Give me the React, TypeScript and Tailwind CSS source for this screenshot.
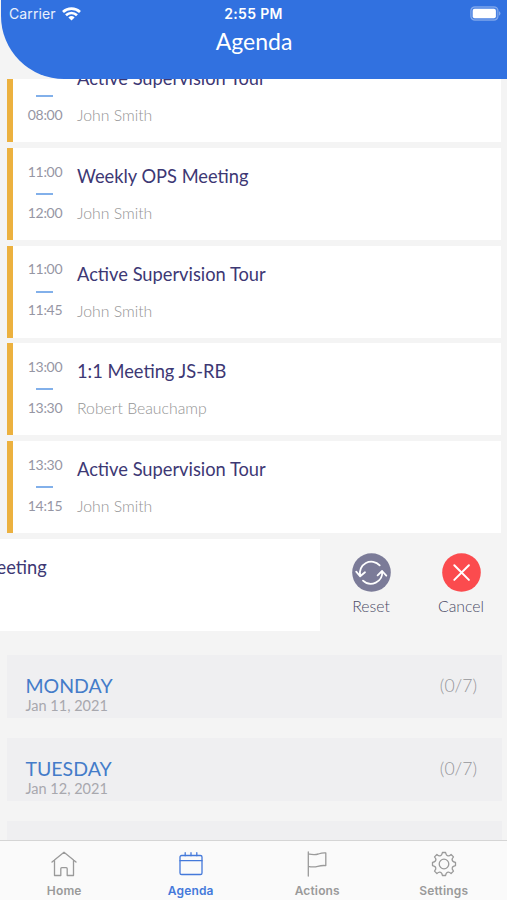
import React from 'react';

interface Meeting {
  start: string;
  end: string;
  title: string;
  owner: string;
}

const meetings: Meeting[] = [
  { start: '07:00', end: '08:00', title: 'Active Supervision Tour', owner: 'John Smith' },
  { start: '11:00', end: '12:00', title: 'Weekly OPS Meeting', owner: 'John Smith' },
  { start: '11:00', end: '11:45', title: 'Active Supervision Tour', owner: 'John Smith' },
  { start: '13:00', end: '13:30', title: '1:1 Meeting JS-RB', owner: 'Robert Beauchamp' },
  { start: '13:30', end: '14:15', title: 'Active Supervision Tour', owner: 'John Smith' },
];

const days = [
  { name: 'MONDAY', date: 'Jan 11, 2021', count: '(0/7)' },
  { name: 'TUESDAY', date: 'Jan 12, 2021', count: '(0/7)' },
];

function StatusBar() {
  return (
    <div className="grid grid-cols-3 items-center h-[27px] pl-[8px] pr-[6px] font-['Inter','Liberation_Sans',sans-serif]">
      <div className="flex items-center gap-[6px]">
        <span className="text-[14px] leading-none tracking-[0.1px] text-white/90">Carrier</span>
        <svg width="19" height="14" viewBox="0 0 19 14" fill="none" stroke="white" strokeWidth="2.7">
          <path d="M1 4.9a12.4 12.4 0 0 1 17 0" />
          <path d="M4 8.2a8 8 0 0 1 11 0" />
          <path d="M9.5 13.6 6.4 10.4a4.5 4.5 0 0 1 6.2 0Z" fill="white" stroke="none" />
        </svg>
      </div>
      <span className="text-center text-[14px] leading-none font-semibold tracking-[0.35px] text-white -ml-[3px]">2:55 PM</span>
      <svg className="justify-self-end" width="31" height="15" viewBox="0 0 31 15">
        <rect x="0.8" y="0.8" width="27.2" height="13.4" rx="4" fill="white" fillOpacity="0.12" stroke="white" strokeOpacity="0.35" strokeWidth="1.2" />
        <rect x="2.7" y="2.8" width="23.2" height="9.4" rx="2" fill="white" />
        <path d="M29 5.3a2.4 2.4 0 0 1 0 4.4Z" fill="white" fillOpacity="0.4" />
      </svg>
    </div>
  );
}

function MeetingCard({ start, end, title, owner }: Meeting) {
  return (
    <div className="flex h-[92px] shrink-0 ml-[7px] mr-[6px] bg-white border-l-[6px] border-[#ecb13f]">
      <div className="w-[64px] flex flex-col items-center pt-[14.5px] text-[14px] leading-[18px] tracking-[-0.3px] text-[#9696a4]">
        <span>{start}</span>
        <span className="w-[17px] h-[2px] mt-[12.5px] mb-[8.5px] mr-[2px] bg-[#82b0ea]" />
        <span>{end}</span>
      </div>
      <div className="flex flex-col pt-[16px]">
        <span className="text-[18.3px] leading-[24px] text-[#3d3874]">{title}</span>
        <span className="mt-[15px] text-[15.8px] leading-[20px] font-light text-[#949494]">{owner}</span>
      </div>
    </div>
  );
}

function SwipeAction({ label, children }: { label: string; children: React.ReactNode }) {
  return (
    <div className="w-[90px] flex flex-col items-center pt-[14px]">
      {children}
      <span className="mt-[4px] text-[15.8px] leading-[20px] font-light text-[#4c4c66]">{label}</span>
    </div>
  );
}

function SwipedRow() {
  return (
    <div className="flex h-[92px] shrink-0">
      <div className="w-[320px] bg-white pt-[16px] -indent-[3.5px] overflow-hidden text-[18.3px] leading-[24px] text-[#3d3874]">
        eeting
      </div>
      <div className="flex pl-[6px]">
        <SwipeAction label="Reset">
          <svg width="39" height="39" viewBox="0 0 39 39" fill="none" stroke="white" strokeWidth="1.8" strokeLinecap="round" strokeLinejoin="round">
            <circle cx="19.5" cy="19.5" r="19.3" fill="#7b7b98" stroke="none" />
            <path d="M27.7 12.4A11.4 11.4 0 0 0 8.2 22.8M4.2 18.6l4 4.7 4.8-4" />
            <path d="M11 27.6A11.4 11.4 0 0 0 30.2 18.4M25.6 22.4l4.5-4.4 4.2 4.7" />
          </svg>
        </SwipeAction>
        <SwipeAction label="Cancel">
          <svg width="39" height="39" viewBox="0 0 39 39" fill="none" stroke="white" strokeWidth="2" strokeLinecap="round">
            <circle cx="19.5" cy="19.5" r="19.3" fill="#fb4b4e" stroke="none" />
            <path d="m12.3 12.3 14.6 14.6M26.9 12.3 12.3 26.9" />
          </svg>
        </SwipeAction>
      </div>
    </div>
  );
}

function DayCard({ name, date, count }: { name: string; date: string; count: string }) {
  return (
    <div className="flex justify-between h-[63px] shrink-0 ml-[7px] mr-[5px] pl-[18.5px] pr-[25px] pt-[18px] bg-[#efeff1]">
      <div className="flex flex-col">
        <span className="text-[19.5px] leading-[26px] text-[#447cc9]">{name}</span>
        <span className="-mt-px text-[14.5px] leading-[16px] text-[#a8a8ae]">{date}</span>
      </div>
      <span className="text-[17.6px] leading-[26px] font-light text-[#96969a]">{count}</span>
    </div>
  );
}

const tabs = [
  {
    label: 'Home',
    icon: <path d="M1 11 13 1.2 25 11M3.5 9v15.5h6.3v-6.8c0-.6.4-1 1-1h4.4c.6 0 1 .4 1 1v6.8h6.3V9" />,
  },
  {
    label: 'Agenda',
    active: true,
    icon: (
      <>
        <rect x="2" y="4.5" width="22" height="19" rx="1.6" />
        <path d="M2 9.7h22M7.2 1.7v3M13 1.7v3M18.8 1.7v3" />
      </>
    ),
  },
  {
    label: 'Actions',
    icon: <path d="M4.3 1v24M4.3 2.8c5 1.2 6.6 1.1 10 .2 3-.9 5-1.3 7.500-1v12.600c-2.500-.3-5-.1-8 .7-3.500.9-6 .9-9.500 0" />,
  },
  {
    label: 'Settings',
    icon: (
      <>
        <circle cx="13" cy="13" r="4.8" />
        <path d="M11.4 1.5h3.2q.5 3 2.3 3.3 1.3.4 3.2-1.300l2.400 2.400q-1.700 1.900-1.300 3.200.3 1.800 3.300 2.300v3.200q-3 .5-3.300 2.300-.4 1.300 1.300 3.200l-2.400 2.400q-1.900-1.700-3.200-1.300-1.800.3-2.300 3.300h-3.200q-.5-3-2.300-3.300-1.300-.4-3.200 1.300l-2.400-2.400q1.700-1.900 1.300-3.200-.3-1.800-3.300-2.300v-3.200q3-.5 3.300-2.300.4-1.300-1.300-3.200l2.400-2.400q1.900 1.700 3.200 1.300 1.800-.3 2.300-3.300Z" />
      </>
    ),
  },
];

function TabBar() {
  return (
    <nav className="grid grid-cols-4 h-[60px] shrink-0 pl-[1px] border-t border-[#d5d5d5] bg-[#fafafa] font-['Inter','Liberation_Sans',sans-serif]">
      {tabs.map((tab) => (
        <div
          key={tab.label}
          className={`flex flex-col items-center pt-[9.5px] ${tab.active ? 'text-[#4479da]' : 'text-[#9a9a9a]'}`}
        >
          <svg width="26" height="26" viewBox="0 0 26 26" fill="none" stroke="currentColor" strokeWidth="1.3" strokeLinejoin="round" strokeLinecap="round">
            {tab.icon}
          </svg>
          <span className="mt-[6.5px] text-[12px] leading-[16px] font-semibold tracking-[0.15px]">{tab.label}</span>
        </div>
      ))}
    </nav>
  );
}

export default function App() {
  return (
    <div className="w-[507px] h-[900px] flex flex-col overflow-hidden bg-[#f4f4f4] font-['Lato',sans-serif]">
      <header className="h-[79px] shrink-0 ml-px bg-[#3171e0] rounded-bl-[63px]">
        <StatusBar />
        <h1 className="text-center text-[23px] leading-[28px] text-white">Agenda</h1>
      </header>
      <main className="flex-1 min-h-0 overflow-hidden">
        <div className="flex flex-col gap-[5.7px] -mt-[28.6px]">
          {meetings.map((meeting, idx) => (
            <MeetingCard key={idx} {...meeting} />
          ))}
          <SwipedRow />
        </div>
        <div className="flex flex-col gap-[20px] mt-[24px]">
          {days.map((day) => (
            <DayCard key={day.name} {...day} />
          ))}
          <div className="h-[63px] shrink-0 ml-[7px] mr-[5px] bg-[#efeff1]" />
        </div>
      </main>
      <TabBar />
    </div>
  );
}
